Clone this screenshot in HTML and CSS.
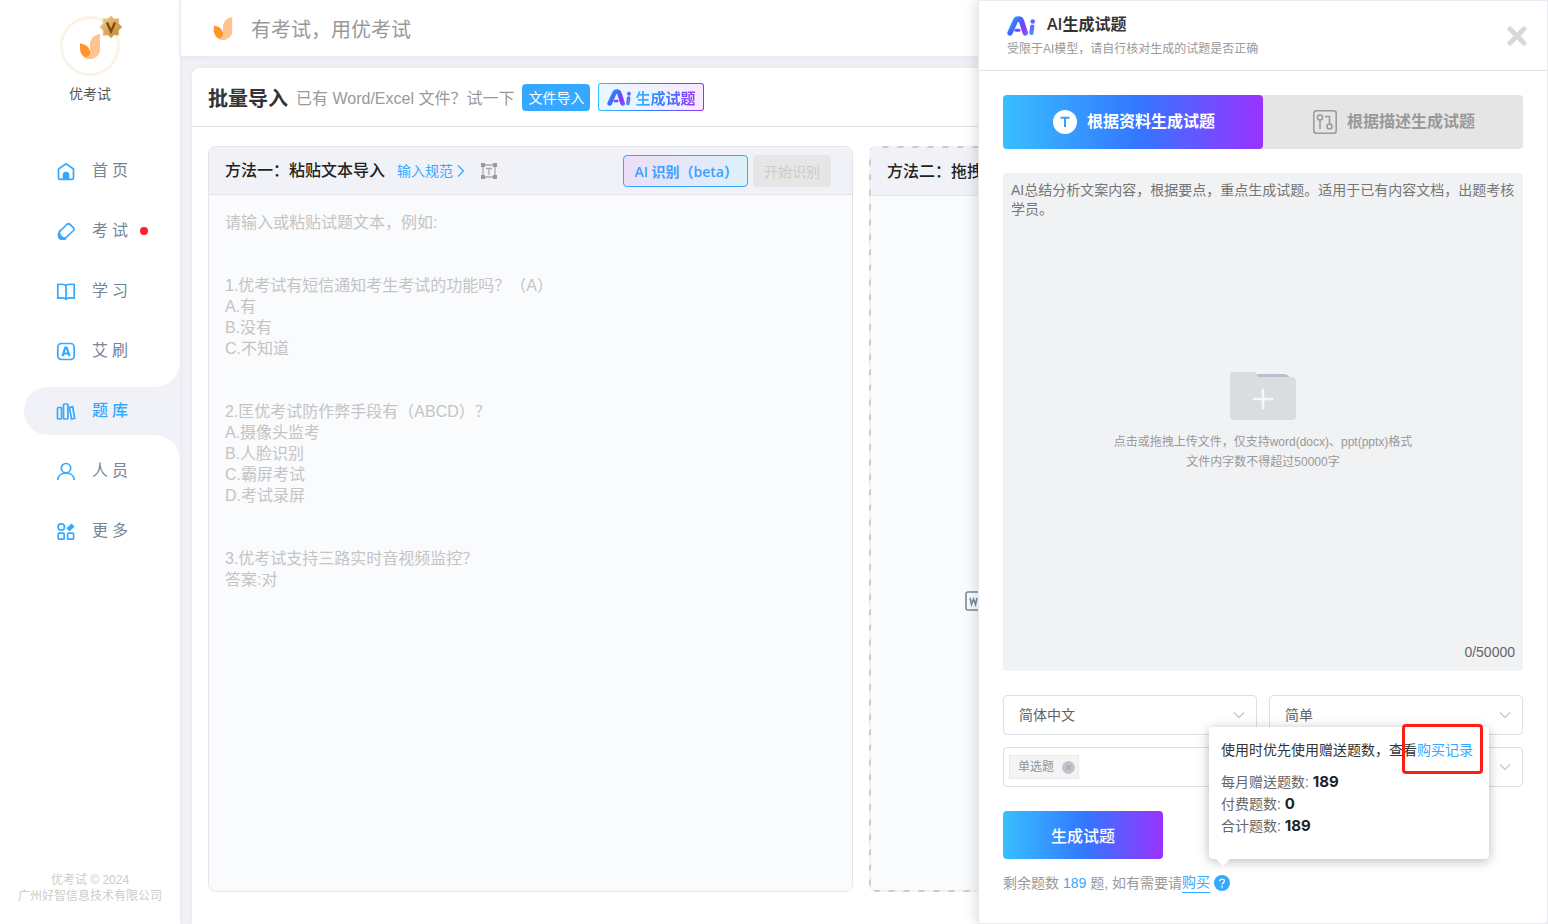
FILE: index.html
```html
<!DOCTYPE html>
<html lang="zh-CN">
<head>
<meta charset="utf-8">
<title>优考试</title>
<link rel="stylesheet" href="styles.css">
</head>
<body>
<svg class="defs" aria-hidden="true">
  <defs>
    <linearGradient id="ai-grad" x1="0" y1="0" x2="28" y2="20" gradientUnits="userSpaceOnUse">
      <stop offset="0" stop-color="#2fb4ff"/><stop offset=".35" stop-color="#3f6bff"/><stop offset=".62" stop-color="#8a35ff"/><stop offset="1" stop-color="#2fb4ff"/>
    </linearGradient>
    <linearGradient id="gold" x1="0" y1="0" x2="1" y2="1">
      <stop offset="0" stop-color="#f3d594"/><stop offset="1" stop-color="#bd7a2a"/>
    </linearGradient>
    <symbol id="flame" viewBox="0 0 20 25">
      <path d="M20 0v14.500a10 10 0 0 1-18 6.500l8-5V11C10 5 14 .8 20 0z" fill="#ffc38f"/>
      <path d="M0 9.500c5.500.5 10 4 10 9 0 2.600-1.700 4.600-4.500 4.600C2 22 0 18.500 0 14.500z" fill="#ff962b"/>
    </symbol>
    <symbol id="ai" viewBox="0 0 28 20">
      <g fill="none" stroke="url(#ai-grad)" stroke-linecap="round" stroke-linejoin="round">
        <path d="M3 17 8.300 5.200c1.200-3 5.400-3 6.200 0L18.300 17" stroke-width="5.400"/>
        <path d="M9 14.200h3" stroke-width="3"/>
        <path d="M25.300 10.500 24.500 17" stroke-width="4.200"/>
      </g>
      <circle cx="25.700" cy="5.500" r="2.300" fill="#5a6bff"/>
    </symbol>
    <symbol id="chevron" viewBox="0 0 12 12">
      <path d="M1 3.500 6 8.500l5-5" fill="none" stroke="#c0c4cc" stroke-width="1.200"/>
    </symbol>
  </defs>
</svg>
<div class="app">
  <aside class="sidebar">
    <div class="avatar">
      <svg class="avatar-logo"><use href="#flame"/></svg>
      <svg class="badge" viewBox="0 0 24 24">
        <path d="M12 .8 15 4l4.800-.2-.1 4.800L23.200 12l-3.500 3.400.1 4.800-4.800-.2-3 3.200L9 20l-4.800.2.1-4.800L.8 12l3.500-3.400-.1-4.800L9 4z" fill="url(#gold)" stroke="#e9c98a"/>
        <path d="M8 7.500l4 9 4-9" fill="none" stroke="#8a4c08" stroke-width="2.400"/>
      </svg>
    </div>
    <div class="account">优考试</div>
    <nav class="nav">
      <a class="nav-item" href="#">
        <svg viewBox="0 0 20 20"><path d="M2.500 8 10 2.800 17.500 8v9a1.300 1.300 0 0 1-1.300 1.300H3.800A1.300 1.300 0 0 1 2.500 17z"/><path class="solid" d="M7.500 18v-4a2.500 2.500 0 0 1 5 0v4z"/></svg>
        <span>首页</span></a>
      <a class="nav-item" href="#">
        <svg viewBox="0 0 20 20"><path d="M10.800 3.500 3.300 11c-1.200 3-.5 5.500 1.200 7h4l9-8.500c1-1 .9-1.600.2-2.400l-3.400-3.500c-1.200-1.100-2.300-1.200-3.500-.1z"/><path class="solid" d="M3.300 11c-1.500 3.500-.5 7 1.700 7h4l-.5-1c-3-.5-4.700-2.500-5.200-6z"/></svg>
        <span>考试</span><i class="dot"></i></a>
      <a class="nav-item" href="#">
        <svg viewBox="0 0 20 20"><path d="M10 4.500C8.500 3.300 5 3.100 1.800 3.500v13.600c3.200-.4 6.700-.2 8.200 1 1.500-1.200 5-1.400 8.200-1V3.500C15 3.100 11.500 3.300 10 4.500zM10 4.500v13.600"/></svg>
        <span>学习</span></a>
      <a class="nav-item" href="#">
        <svg viewBox="0 0 20 20"><rect x="1.800" y="2.500" width="16.400" height="16" rx="3.500"/><path d="M6.500 15.200 9.300 6.500h1.400l2.800 8.700M7.500 12.500h5" stroke-width="2.200"/></svg>
        <span>艾刷</span></a>
      <a class="nav-item active" href="#">
        <svg viewBox="0 0 20 20"><rect x="1.500" y="6.500" width="4" height="11.500" rx=".8"/><rect x="7.500" y="3" width="4.400" height="15" rx=".8"/><path d="M13.400 6.300l3.300-.5 2 11.600-3.200.6z"/></svg>
        <span>题库</span></a>
      <a class="nav-item" href="#">
        <svg viewBox="0 0 20 20"><circle cx="10" cy="7.200" r="4.700"/><path d="M1.800 19C2 14.500 5.500 12 10 12s8 2.500 8.200 7"/></svg>
        <span>人员</span></a>
      <a class="nav-item" href="#">
        <svg viewBox="0 0 20 20"><circle cx="5.300" cy="6" r="3.200"/><rect x="2.200" y="12.200" width="6" height="6" rx="1"/><rect x="11.600" y="12.200" width="6" height="6" rx="1"/><path d="M12 8.800 17 4" stroke-width="4.500"/></svg>
        <span>更多</span></a>
    </nav>
    <footer class="copyright">优考试 © 2024<br>广州好智信息技术有限公司</footer>
  </aside>

  <div class="content">
    <header class="topbar"><svg><use href="#flame"/></svg><span>有考试，用优考试</span></header>
    <main class="card">
      <div class="card-head">
        <h1>批量导入</h1>
        <span class="hint">已有 Word/Excel 文件？试一下</span>
        <button class="btn-file" type="button">文件导入</button>
        <button class="btn-ai" type="button"><svg><use href="#ai"/></svg><span>生成试题</span></button>
      </div>
      <div class="panels">
        <section class="panel">
          <div class="panel-head">
            <h2><label for="paste">方法一：粘贴文本导入</label></h2>
            <a class="spec" href="#">输入规范<svg viewBox="0 0 8 14"><path d="M1 1.500 6.500 7 1 12.500"/></svg></a>
            <svg class="frame-icon" viewBox="0 0 16 16"><path d="M2 2h12v12H2zM5 5.500h6M8 5.500V12" fill="none" stroke="#aaa" stroke-width="1.300"/><path d="M0 0h4v4H0zM12 0h4v4h-4zM0 12h4v4H0zM12 12h4v4h-4z" fill="#999"/></svg>
            <button class="btn-detect" type="button">AI 识别（beta）</button>
            <button class="btn-start" type="button" disabled>开始识别</button>
          </div>
          <textarea id="paste" class="paste" placeholder="请输入或粘贴试题文本，例如:&#10;&#10;&#10;1.优考试有短信通知考生考试的功能吗？（A）&#10;A.有&#10;B.没有&#10;C.不知道&#10;&#10;&#10;2.匡优考试防作弊手段有（ABCD）？&#10;A.摄像头监考&#10;B.人脸识别&#10;C.霸屏考试&#10;D.考试录屏&#10;&#10;&#10;3.优考试支持三路实时音视频监控？&#10;答案:对"></textarea>
        </section>
        <section class="panel-drop">
          <div class="drop-inner">
            <div class="panel-head"><h2>方法二：拖拽</h2></div>
            <div class="drop-body">
              <svg viewBox="0 0 20 20"><rect x="1" y="1" width="18" height="18" rx="2"/><path d="M5 7l1.500 6.500L8.500 8l2 5.500L12 7" /></svg>
            </div>
          </div>
        </section>
      </div>
    </main>
  </div>

  <aside class="drawer">
    <header class="drawer-head">
      <div>
        <div class="drawer-title"><svg><use href="#ai"/></svg><h2>AI生成试题</h2></div>
        <p>受限于AI模型，请自行核对生成的试题是否正确</p>
      </div>
      <button class="close" type="button" aria-label="关闭"><svg viewBox="0 0 20 20"><path d="M3 3l14 14M17 3 3 17"/></svg></button>
    </header>
    <div class="drawer-body">
      <div class="tabs">
        <button class="tab on" type="button">
          <svg viewBox="0 0 24 24"><circle cx="12" cy="12" r="12" fill="#fff"/><path d="M7.500 7.700h9M12 7.700V17" fill="none" stroke="#35a0ff" stroke-width="2"/></svg>根据资料生成试题</button>
        <button class="tab" type="button">
          <svg viewBox="0 0 24 24" fill="none" stroke="#999" stroke-width="1.500"><rect x=".8" y=".8" width="22.400" height="22.400" rx="2.500"/><circle cx="7" cy="7.500" r="2.500"/><path d="M7 10v9M12 6.500h4.500V14"/><circle cx="16.500" cy="16.500" r="2.500"/></svg>根据描述生成试题</button>
      </div>
      <div class="source">
        <textarea aria-label="文案内容" placeholder="AI总结分析文案内容，根据要点，重点生成试题。适用于已有内容文档，出题考核学员。"></textarea>
        <button class="upload" type="button">
          <svg viewBox="0 0 66 48"><path d="M24 2h31q4 1 6 5v6H24z" fill="#b9c0cf"/><path d="M2 0h23q1 0 2 3t3 2h32q4 0 4 4v35q0 4-4 4H4q-4 0-4-4V2q0-2 2-2z" fill="#d9dddf"/><path d="M33 18v18M24 27h18" stroke="#f4f7ff" stroke-width="2.600" stroke-linecap="round"/></svg>
          <span>点击或拖拽上传文件，仅支持word(docx)、ppt(pptx)格式<br>文件内字数不得超过50000字</span>
        </button>
        <span class="count">0/50000</span>
      </div>
      <div class="selects">
        <div class="select"><select aria-label="语言"><option>简体中文</option></select><svg><use href="#chevron"/></svg></div>
        <div class="select"><select aria-label="难度"><option>简单</option></select><svg><use href="#chevron"/></svg></div>
        <div class="select multi">
          <span class="tag">单选题<button type="button" aria-label="移除"><svg viewBox="0 0 14 14"><circle cx="7" cy="7" r="7" fill="#c0c4cc"/><path d="M4.500 4.500l5 5M9.500 4.500l-5 5" stroke="#909399"/></svg></button></span>
          <input type="text" aria-label="题型"><svg><use href="#chevron"/></svg>
        </div>
      </div>
      <button class="generate" type="button">生成试题</button>
      <div class="balance">
        <span>剩余题数 <b>189</b> 题, 如有需要请</span><a href="#">购买</a>
        <div class="help">
          <svg viewBox="0 0 16 16"><circle cx="8" cy="8" r="8" fill="#35a8ff"/><path d="M5.800 6.300c0-3 4.600-2.900 4.600-.3 0 1.700-2.300 1.700-2.300 3.500" fill="none" stroke="#fff" stroke-width="1.300"/><circle cx="8.100" cy="11.700" r=".9" fill="#fff"/></svg>
          <div class="popover">
            <p class="lead">使用时优先使用赠送题数，查看<a href="#">购买记录</a></p>
            <p>每月赠送题数: <b>189</b></p>
            <p>付费题数: <b>0</b></p>
            <p>合计题数: <b>189</b></p>
          </div>
        </div>
      </div>
    </div>
  </aside>
</div>
</body>
</html>
```
FILE: styles.css
```css
:root {
  --blue: #35a8ff;
  --line: #e4e4e6;
  --page: #f1f2f7;
  --brand: linear-gradient(90deg, #38bfff, #3377ff 52%, #9933ff);
}
* { box-sizing: border-box; }
body, h1, h2, p { margin: 0; }
body, button, input, select, textarea {
  font-family: "Liberation Sans", "Noto Sans CJK SC", sans-serif;
}
body { font-size: 14px; color: #333; background: var(--page); }
button { border: 0; padding: 0; background: none; cursor: pointer; }
a { color: var(--blue); text-decoration: none; }
svg { flex: none; display: block; }
.defs { position: absolute; width: 0; height: 0; }

.app { position: relative; display: flex; height: 100vh; overflow: hidden; }

/* Sidebar */
.sidebar {
  width: 180px;
  flex: none;
  display: flex;
  flex-direction: column;
  align-items: center;
  padding: 16px 0 20px;
  background: #fff;
  box-shadow: 0 0 6px #e3e4ee;
}
.avatar {
  position: relative;
  display: grid;
  place-items: center;
  width: 60px;
  height: 60px;
  border: 3px solid #fbf3e6;
  border-radius: 50%;
}
.avatar-logo { width: 20px; height: 25px; }
.badge { position: absolute; top: -4px; right: -6px; width: 24px; height: 24px; }
.account { margin-top: 8px; line-height: 20px; color: #555; }
.nav {
  width: 100%;
  display: flex;
  flex-direction: column;
  gap: 12px;
  margin-top: 43px;
  padding-left: 24px;
}
.nav-item {
  position: relative;
  display: flex;
  align-items: center;
  height: 48px;
  padding-left: 32px;
  border-radius: 24px 0 0 24px;
  font-size: 16px;
  line-height: 22px;
  letter-spacing: 4px;
  color: #768696;
}
.nav-item svg {
  width: 20px;
  height: 20px;
  margin-right: 16px;
  fill: none;
  stroke: var(--blue);
  stroke-width: 1.7;
}
.nav-item .solid { fill: var(--blue); }
.nav-item.active { background: var(--page); color: var(--blue); font-weight: 500; }
.nav-item.active::before, .nav-item.active::after {
  content: "";
  position: absolute;
  right: 0;
  width: 24px;
  height: 24px;
}
.nav-item.active::before { bottom: 100%; background: radial-gradient(circle at 0 0, #fff 23px, var(--page) 24px); }
.nav-item.active::after { top: 100%; background: radial-gradient(circle at 0 100%, #fff 23px, var(--page) 24px); }
.dot { width: 8px; height: 8px; margin-left: 8px; border-radius: 50%; background: #ff1f28; }
.copyright { margin-top: auto; font-size: 12px; line-height: 16px; text-align: center; color: #ccc; }

/* Content */
.content { flex: 1; min-width: 0; display: flex; flex-direction: column; gap: 12px; padding-left: 1px; }
.topbar {
  display: flex;
  align-items: center;
  gap: 18px;
  height: 56px;
  flex: none;
  padding-left: 32px;
  background: #fff;
  box-shadow: 0 1px 6px #e3e4ea;
  font-size: 20px;
  color: #999;
}
.topbar svg { width: 20px; height: 23px; }
.card {
  flex: 1;
  display: flex;
  flex-direction: column;
  margin: 0 12px 0 11px;
  background: #fff;
  border-radius: 8px 8px 0 0;
  box-shadow: 0 0 6px #e6e7ee;
}
.card-head {
  display: flex;
  align-items: center;
  height: 59px;
  padding-left: 16px;
  border-bottom: 1px solid var(--line);
}
.card-head h1 { font-size: 20px; }
.hint { margin: 0 8px; font-size: 16px; color: #999; }
.btn-file {
  height: 27px;
  padding: 0 6px;
  border-radius: 4px;
  background: var(--blue);
  color: #fff;
  font-size: 14px;
}
.btn-ai {
  display: flex;
  align-items: center;
  gap: 4px;
  height: 28px;
  margin-left: 8px;
  padding: 0 8px;
  border: 1px solid transparent;
  border-radius: 3px;
  background: linear-gradient(90deg, #e8f8ff, #f6eaff) padding-box, var(--brand) border-box;
  font-size: 15px;
  font-weight: 700;
}
.btn-ai svg { width: 24px; height: 17px; }
.btn-ai span { background: var(--brand); background-clip: text; color: transparent; }

.panels {
  flex: 1;
  display: grid;
  grid-template-columns: 1fr 1fr;
  gap: 16px;
  padding: 19px 22px 32px 16px;
}
.panel {
  display: flex;
  flex-direction: column;
  border: 1px solid var(--line);
  border-radius: 8px;
  overflow: hidden;
}
.panel-head {
  display: flex;
  align-items: center;
  height: 48px;
  flex: none;
  padding: 0 21px 0 16px;
  border-bottom: 1px solid var(--line);
  background: var(--page);
}
.panel-head h2, .drawer-title h2 { font-size: 16px; line-height: 22px; font-weight: 500; color: #222; }
.spec { display: flex; align-items: center; gap: 4px; margin: 0 16px 0 12px; line-height: 18px; }
.spec svg { width: 8px; height: 14px; fill: none; stroke: var(--blue); stroke-width: 1.2; }
.frame-icon { width: 16px; height: 16px; }
.btn-detect, .btn-start { height: 32px; border-radius: 4px; font-size: 14px; }
.btn-detect {
  margin-left: auto;
  padding: 0 9px 0 10px;
  border: 1px solid var(--blue);
  background: linear-gradient(90deg, #ebdff7, #dcf1fa);
  color: #3d9fff;
  font-family: "Open Sans", "Noto Sans CJK SC", sans-serif;
  font-weight: 600;
}
.btn-start { margin-left: 5px; padding: 0 11px; background: #e6e6e6; color: #ccc; }
.paste {
  flex: 1;
  padding: 17px 16px;
  border: 0;
  outline: 0;
  resize: none;
  background: #fafbfd;
  font-size: 16px;
  line-height: 21px;
}
.paste::placeholder { color: #c4c4c4; }
.panel-drop {
  display: flex;
  padding: 2px;
  border-radius: 8px;
  background: linear-gradient(135deg, #ccc 0 17%, #f2f2f2 17% 50%, #ccc 50% 67%, #f2f2f2 67%) 0 0 / 15px 15px;
}
.drop-inner { flex: 1; border-radius: 6px; overflow: hidden; background: #fafbfd; }
.drop-body { padding: 395px 0 0 94px; }
.drop-body svg { width: 20px; height: 20px; fill: none; stroke: #768c9c; stroke-width: 1.6; }

/* Drawer */
.drawer {
  position: absolute;
  top: 0;
  right: 0;
  bottom: 0;
  width: 570px;
  display: flex;
  flex-direction: column;
  border: 1px solid #e7ebf0;
  background: #fff;
  box-shadow: 0 0 14px rgba(0, 0, 0, .18);
}
.drawer-head {
  display: flex;
  justify-content: space-between;
  align-items: center;
  height: 70px;
  flex: none;
  padding: 0 20px 0 28px;
  border-bottom: 1px solid var(--line);
}
.drawer-title { display: flex; align-items: flex-end; gap: 12px; }
.drawer-title svg { width: 28px; height: 20px; }
.drawer-title h2 {
  line-height: 24px;
  font-family: "Open Sans", "Noto Sans CJK SC", sans-serif;
  font-weight: 600;
  color: #333;
}
.drawer-head p { margin-top: 3px; font-size: 12px; line-height: 20px; color: #999; }
.close svg { width: 20px; height: 20px; stroke: #d8d8d8; stroke-width: 5; stroke-linecap: round; }
.drawer-body { flex: 1; min-height: 0; display: flex; flex-direction: column; padding: 24px 24px 30px; }
.tabs { display: grid; grid-template-columns: 1fr 1fr; border-radius: 4px; background: #e5e5e5; }
.tab {
  display: flex;
  align-items: center;
  justify-content: center;
  gap: 10px;
  height: 54px;
  padding-left: 2px;
  border-radius: 4px;
  font-size: 16px;
  line-height: 22px;
  font-weight: 700;
  color: #999;
}
.tab.on { background: var(--brand); color: #fff; }
.tab svg { width: 24px; height: 24px; }
.source { flex: 1; display: grid; margin: 24px 0; border-radius: 4px; background: #f1f2f4; }
.source > * { grid-area: 1 / 1; }
.source textarea {
  padding: 8px;
  border: 0;
  outline: 0;
  resize: none;
  overflow: hidden;
  background: none;
  font-size: 14px;
  line-height: 19px;
}
.source textarea::placeholder { color: #757575; }
.upload {
  place-self: center;
  display: flex;
  flex-direction: column;
  align-items: center;
  gap: 12px;
  padding-bottom: 1px;
  font-size: 12px;
  line-height: 20px;
  color: #999;
}
.upload svg { width: 66px; height: 48px; }
.count { place-self: end; padding: 8px; line-height: 21px; color: #666; }
.selects { display: grid; grid-template-columns: 1fr 1fr; gap: 12px; }
.select {
  display: flex;
  align-items: center;
  height: 40px;
  padding-right: 11px;
  border: 1px solid #dcdfe6;
  border-radius: 4px;
}
.select > svg { width: 12px; height: 12px; }
.select select, .select input {
  flex: 1;
  min-width: 0;
  height: 100%;
  border: 0;
  outline: 0;
  background: none;
  font-size: 14px;
  color: #606266;
}
.select select { appearance: none; padding: 0 0 0 15px; }
.multi { grid-column: 1 / -1; padding-left: 5px; }
.tag {
  display: flex;
  align-items: center;
  gap: 8px;
  height: 24px;
  padding: 0 3px 0 8px;
  border: 1px solid #e9e9eb;
  background: #f4f4f5;
  font-size: 12px;
  line-height: 16px;
  color: #909399;
}
.tag svg { width: 13px; height: 13px; }
.generate {
  align-self: flex-start;
  width: 160px;
  height: 48px;
  flex: none;
  margin: 24px 0 14px;
  border-radius: 4px;
  background: var(--brand);
  color: #fff;
  font-size: 16px;
  font-weight: 500;
}
.balance { display: flex; align-items: center; line-height: 20px; color: #999; }
.balance b { font-weight: 400; color: var(--blue); }
.balance > a { line-height: 19px; border-bottom: 1px solid var(--blue); }
.help { position: relative; margin-left: 4px; }
.help > svg { width: 16px; height: 16px; }
.popover {
  position: absolute;
  left: -5px;
  bottom: calc(100% + 16px);
  width: 280px;
  padding: 12px 12px 22px;
  border-radius: 4px;
  background: #fff;
  box-shadow: 0 2px 12px rgba(0, 0, 0, .28);
  line-height: 22px;
  color: #666;
}
.popover::after {
  content: "";
  position: absolute;
  top: 100%;
  left: 7px;
  border: 7px solid transparent;
  border-top-color: #fff;
  border-bottom: 0;
}
.popover .lead { margin-bottom: 10px; white-space: nowrap; color: #333; }
.popover p b { font-family: Inter, sans-serif; font-size: 15px; font-weight: 700; line-height: 20px; color: #222; }
.popover a { position: relative; }
.popover a::after {
  content: "";
  position: absolute;
  inset: -18px -10px -16px -15px;
  border: 3px solid #fb1e14;
  border-radius: 4px;
}
```
